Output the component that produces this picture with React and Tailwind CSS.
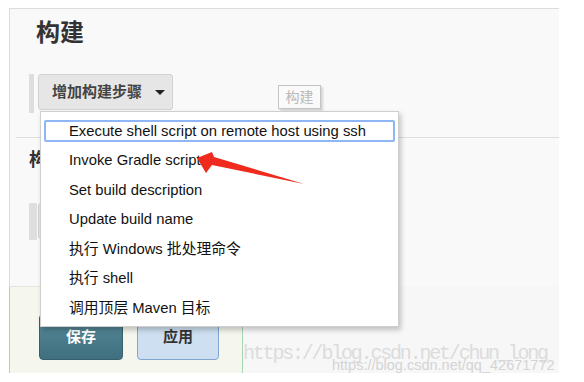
import React from 'react';

const font = { fontFamily: '"Liberation Sans", "Noto Sans CJK SC", sans-serif' };

const steps = [
  'Execute shell script on remote host using ssh',
  'Invoke Gradle script',
  'Set build description',
  'Update build name',
  '执行 Windows 批处理命令',
  '执行 shell',
  '调用顶层 Maven 目标',
];

function StepMenu() {
  return (
    <div className="absolute left-[40px] top-[111px] w-[359px] h-[216px] bg-white border border-[#cfcfcf] shadow-[2px_3px_5px_rgba(0,0,0,0.22)] pt-[4px] px-[3px] z-20">
      {steps.map((s, i) => (
        <div key={s} className="h-[29.5px] py-[4px]">
          <div
            className={
              'h-full flex items-center pl-[23px] text-[14.8px] text-[#111] ' +
              (i === 0 ? 'border-2 border-[#8fb6f4] rounded-[2px]' : 'border-2 border-transparent')
            }
          >
            {s}
          </div>
        </div>
      ))}
    </div>
  );
}

export default function App() {
  return (
    <div className="relative w-[584px] h-[382px] bg-white overflow-hidden pt-[8px] pl-[9px]" style={font}>
      <div className="w-[550px] h-[365px] border-l border-t border-[#dcdcdc] bg-[#f9f9f9] flex flex-col">
        {/* heading */}
        <div className="mt-[9px] pl-[26px] h-[30px] leading-[30px] text-[24px] font-bold text-[#333]">构建</div>

        {/* add step row */}
        <div className="mt-[26px] h-[39px] flex items-start pl-[19px]">
          <div className="w-[5px] h-[39px] bg-[#dedede]" />
          <button className="ml-[4px] w-[135px] h-[36px] bg-[#e6e6e6] border border-[#d2d2d2] rounded-[3px] flex items-center pl-[13px] text-[15px] font-bold text-[#444]">
            增加构建步骤
            <span className="ml-[13px] w-0 h-0 border-l-[5px] border-r-[5px] border-t-[5px] border-l-transparent border-r-transparent border-t-[#222]" />
          </button>
        </div>

        <div className="mt-[24px] ml-[6px] h-px bg-[#dddddd]" />

        {/* post build section (behind menu) */}
        <div className="mt-[12px] pl-[19px] h-[20px] leading-[20px] text-[18px] font-bold text-[#333]">构建后操作</div>
        <div className="mt-[33px] h-[37px] flex items-start pl-[19px]">
          <div className="w-[8px] h-[37px] bg-[#dedede]" />
          <div className="ml-[1px] w-[150px] h-[36px] bg-[#e6e6e6] border border-[#d2d2d2] rounded-[3px]" />
        </div>

        {/* bottom bar */}
        <div className="mt-[46px] flex-1 flex">
          <div className="-ml-px w-[234px] h-full border-l border-t border-r border-l-[#a8d5b5] border-r-[#a8d5b5] border-t-[#e2e6dc] bg-[#f5f6ee] flex items-start pt-[27px] pl-[29px] gap-[14px]">
            <button className="w-[84px] h-[46px] rounded-[4px] bg-gradient-to-b from-[#56899a] to-[#40707f] border border-[#375f6c] text-white text-[15px] font-bold">
              保存
            </button>
            <button className="w-[82px] h-[46px] rounded-[4px] bg-[#cddff0] border border-[#7ea6d1] text-[#333] text-[15px] font-bold">
              应用
            </button>
          </div>
          <div className="flex-1 bg-[#f7f7f7]" />
        </div>
      </div>

      {/* tooltip */}
      <div className="absolute left-[278px] top-[85px] w-[43px] h-[24px] bg-[#fafafa] border border-[#c4c4c4] shadow-[2px_2px_2px_rgba(0,0,0,0.15)] flex items-center justify-center text-[14px] text-[#b8b8b8] z-10">
        构建
      </div>

      <StepMenu />

      {/* red arrow annotation */}
      <svg className="absolute inset-0 z-30 pointer-events-none" width="584" height="382" viewBox="0 0 584 382">
        <polygon
          points="197,158 212,152 214,157 304,184 212,165 206,173"
          fill="#f02a1c"
        />
      </svg>

      {/* watermarks */}
      <div
        className="absolute left-[243px] top-[339px] text-[20px] tracking-[-2.2px] text-[#dcdcdc] z-10 whitespace-nowrap"
        style={{ fontFamily: '"Liberation Mono", monospace' }}
      >
        https://blog.csdn.net/chun_long
      </div>
      <div className="absolute left-[332px] top-[355px] text-[14.5px] text-[#d4d4d4] z-10 whitespace-nowrap">
        https://blog.csdn.net/qq_42671772
      </div>
    </div>
  );
}
